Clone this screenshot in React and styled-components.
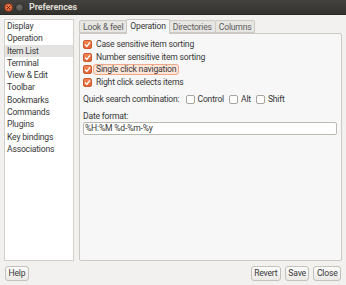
import React from "react";
import styled, { createGlobalStyle } from "styled-components";

const Global = createGlobalStyle`
  html, body { margin: 0; padding: 0; background: #f2f1f0; }
  body { font-family: Roboto, "Noto Sans", sans-serif; }
  * { box-sizing: border-box; }
`;

const Window = styled.div`
  width: 346px;
  height: 285px;
  display: flex;
  flex-direction: column;
  background: #f2f1f0;
  color: #383838;
  font-size: 8.6px;
  letter-spacing: -0.2px;
  overflow: hidden;
`;

const TitleBar = styled.div`
  height: 15px;
  flex: none;
  display: flex;
  align-items: center;
  padding-left: 4px;
  gap: 2px;
  background: linear-gradient(#43423e, #3a3935 60%, #32312d);
  border-bottom: 1px solid #2a2926;
`;

const WinButton = styled.span`
  width: 9px;
  height: 9px;
  border-radius: 50%;
  background: ${(p) =>
    p.$close
      ? "radial-gradient(circle at 50% 40%, #f68a5f, #dc5a2b 70%, #b7411a)"
      : "radial-gradient(circle at 50% 40%, #6e6c66, #55534e 70%, #44423e)"};
  border: 1px solid ${(p) => (p.$close ? "#8f3a1c" : "#2f2e2b")};
  display: flex;
  align-items: center;
  justify-content: center;
  margin-right: ${(p) => (p.$last ? "3px" : "0")};
`;

const Title = styled.span`
  color: #dfdbd2;
  font-weight: bold;
  font-size: 9px;
  letter-spacing: -0.1px;
  line-height: 14px;
`;

const Body = styled.div`
  flex: 1;
  display: flex;
  flex-direction: column;
  gap: 5px;
  padding: 4px 4px 4px 4px;
  min-height: 0;
`;

const Main = styled.div`
  flex: 1;
  display: flex;
  gap: 5px;
  min-height: 0;
`;

const Sidebar = styled.ul`
  width: 70px;
  margin: 0;
  padding: 0;
  list-style: none;
  background: #ffffff;
  border: 1px solid #d3d0cb;
`;

const SideItem = styled.li`
  height: 12.3px;
  line-height: 12.3px;
  padding-left: 2px;
  white-space: nowrap;
  background: ${(p) => (p.$selected ? "#e4e3e1" : "transparent")};
`;

const Notebook = styled.div`
  flex: 1;
  display: flex;
  flex-direction: column;
  min-width: 0;
`;

const Tabs = styled.div`
  display: flex;
  align-items: flex-end;
  height: 14px;
  position: relative;
  z-index: 1;
`;

const Tab = styled.div`
  height: ${(p) => (p.$active ? "15px" : "13px")};
  margin-bottom: ${(p) => (p.$active ? "-1px" : "0")};
  padding: 0 3px;
  line-height: 12px;
  border: 1px solid #cdc9c3;
  border-bottom: ${(p) => (p.$active ? "none" : "1px solid #cdc9c3")};
  border-radius: 2px 2px 0 0;
  background: ${(p) => (p.$active ? "#f7f7f7" : "#e8e6e3")};
  color: ${(p) => (p.$active ? "#383838" : "#5a5a5a")};
  margin-left: ${(p) => (p.$first ? "0" : "-1px")};
  white-space: nowrap;
`;

const Panel = styled.div`
  flex: 1;
  background: #f7f7f7;
  border: 1px solid #cdc9c3;
  border-radius: 0 2px 2px 2px;
  padding: 4px 3px;
  display: flex;
  flex-direction: column;
`;

const CheckRow = styled.label`
  display: flex;
  align-items: center;
  height: 12.8px;
  gap: 1px;
`;

const Box = styled.span`
  width: 9px;
  height: 9px;
  flex: none;
  border-radius: 2px;
  display: flex;
  align-items: center;
  justify-content: center;
  border: 1px solid ${(p) => (p.$checked ? "#c75a2e" : "#a8a49e")};
  background: ${(p) =>
    p.$checked ? "linear-gradient(#f4875a, #e4612c)" : "#ffffff"};
`;

const Label = styled.span`
  padding: 0 2px;
  line-height: 9px;
  height: 11px;
  display: flex;
  align-items: center;
  border: 1px solid ${(p) => (p.$focused ? "#f2a786" : "transparent")};
  background: ${(p) => (p.$focused ? "#fde5d9" : "transparent")};
  border-radius: 3px;
  white-space: nowrap;
`;

const InlineRow = styled.div`
  display: flex;
  align-items: center;
  height: 13px;
  margin-top: 3.5px;
  white-space: nowrap;
`;

const InlineCheck = styled.span`
  display: flex;
  align-items: center;
  gap: 3px;
  margin-left: ${(p) => p.$ml || "5px"};
`;

const FieldLabel = styled.div`
  margin-top: 4px;
  line-height: 12px;
`;

const Entry = styled.div`
  height: 13px;
  margin-right: 1px;
  background: #ffffff;
  border: 1px solid #bdb9b3;
  border-radius: 2px;
  line-height: 11px;
  padding-left: 1px;
`;

const Footer = styled.div`
  display: flex;
  height: 15px;
  flex: none;
  align-items: stretch;
  gap: 4px;
  padding-left: 1px;
`;

const Spacer = styled.div`
  flex: 1;
`;

const Button = styled.button`
  font: inherit;
  letter-spacing: inherit;
  color: #383838;
  padding: 0 2.5px;
  height: 15px;
  line-height: 13px;
  border: 1px solid #c4c0ba;
  border-radius: 3px;
  background: linear-gradient(#fbfbfb, #eceae7);
  margin-right: ${(p) => (p.$last ? "1px" : "0")};
`;

const Check = () => (
  <svg width="7" height="7" viewBox="0 0 7 7">
    <path d="M1 3.6 L2.8 5.4 L6 1.4" fill="none" stroke="#fff" strokeWidth="1.4" />
  </svg>
);

const CheckBox = ({ checked }) => (
  <Box $checked={checked}>{checked && <Check />}</Box>
);

const items = [
  "Display",
  "Operation",
  "Item List",
  "Terminal",
  "View & Edit",
  "Toolbar",
  "Bookmarks",
  "Commands",
  "Plugins",
  "Key bindings",
  "Associations",
];

const checks = [
  { text: "Case sensitive item sorting" },
  { text: "Number sensitive item sorting" },
  { text: "Single click navigation", focused: true },
  { text: "Right click selects items" },
];

export default function App() {
  return (
    <Window>
      <Global />
      <TitleBar>
        <WinButton $close>
          <svg width="5" height="5" viewBox="0 0 5 5">
            <path d="M1 1 L4 4 M4 1 L1 4" stroke="#5a2210" strokeWidth="1" />
          </svg>
        </WinButton>
        <WinButton $last />
        <Title>Preferences</Title>
      </TitleBar>
      <Body>
        <Main>
          <Sidebar>
            {items.map((it) => (
              <SideItem key={it} $selected={it === "Item List"}>
                {it}
              </SideItem>
            ))}
          </Sidebar>
          <Notebook>
            <Tabs>
              <Tab $first>Look &amp; feel</Tab>
              <Tab $active>Operation</Tab>
              <Tab>Directories</Tab>
              <Tab>Columns</Tab>
            </Tabs>
            <Panel>
              {checks.map((c) => (
                <CheckRow key={c.text}>
                  <CheckBox checked />
                  <Label $focused={c.focused}>{c.text}</Label>
                </CheckRow>
              ))}
              <InlineRow>
                <span>Quick search combination:</span>
                <InlineCheck $ml="6px">
                  <CheckBox />
                  <span>Control</span>
                </InlineCheck>
                <InlineCheck>
                  <CheckBox />
                  <span>Alt</span>
                </InlineCheck>
                <InlineCheck>
                  <CheckBox />
                  <span>Shift</span>
                </InlineCheck>
              </InlineRow>
              <FieldLabel>Date format:</FieldLabel>
              <Entry>%H:%M %d-%m-%y</Entry>
            </Panel>
          </Notebook>
        </Main>
        <Footer>
          <Button>Help</Button>
          <Spacer />
          <Button>Revert</Button>
          <Button>Save</Button>
          <Button $last>Close</Button>
        </Footer>
      </Body>
    </Window>
  );
}
